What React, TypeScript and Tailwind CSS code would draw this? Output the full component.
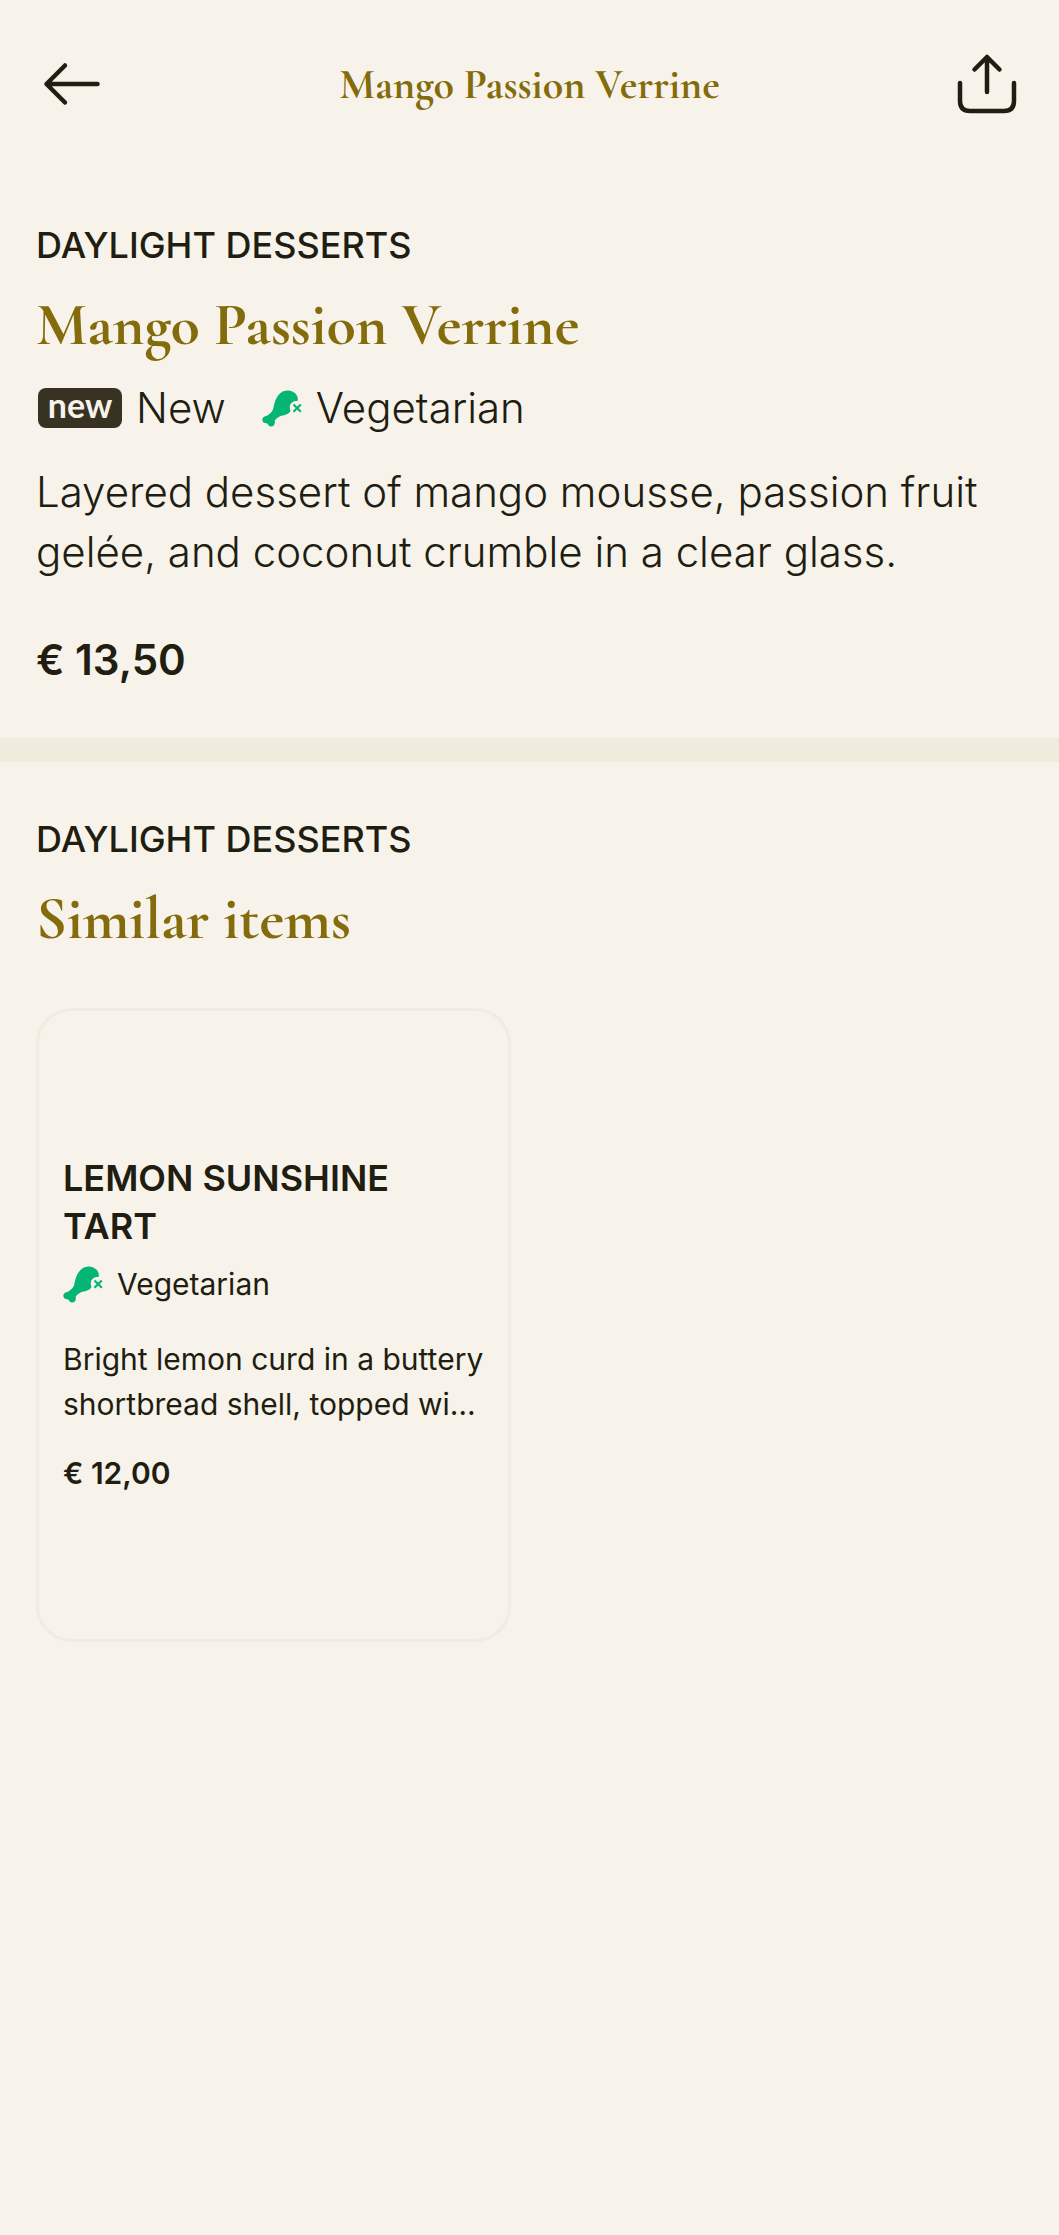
import React from "react";

const serif = "font-['Cormorant_Garamond','Liberation_Serif',serif] font-bold text-[#846b0b]";

function BackIcon() {
  return (
    <svg className="h-[72px] w-[72px]" viewBox="0 0 72 72" fill="none" stroke="#211d10" strokeWidth="4.5" strokeLinecap="round" strokeLinejoin="round" aria-hidden="true">
      <path d="M29 17.500 10.500 36 29 54.500M10.500 36H61.500" />
    </svg>
  );
}

function ShareIcon() {
  return (
    <svg className="h-[72px] w-[72px]" viewBox="0 0 72 72" fill="none" stroke="#211d10" strokeWidth="4.5" strokeLinecap="round" strokeLinejoin="round" aria-hidden="true">
      <path d="M36 44V9M23.500 21.500 36 9 48.500 21.500" />
      <path d="M9 35V53Q9 63 19 63H53Q63 63 63 53V35" />
    </svg>
  );
}

function VegetarianIcon() {
  return (
    <svg className="h-[37px] w-10 shrink-0" viewBox="0 0 40 37" aria-hidden="true">
      <path
        fill="#05b576"
        d="M25.500.5C29.500.6 33.500 2.500 35 5.800C36 8 36 10 35.500 11C31 10.500 27.500 13.500 27.800 18C27.900 19.500 28.500 20.500 28.500 21C27 24 23 25 19.500 25.800C17 26.500 14.500 28.500 13 30C12.500 30.800 12.900 31.200 12.900 32.200C12.800 35 11 37 8.500 36.500C6.500 36.200 6.200 34.500 5.200 33.600C4 33 1.500 33.200.6 31.200C-.4 28.600 1.500 26.200 4 26C5.500 25.900 6.200 25 7.200 24C9.800 22.300 10.800 20.500 11.400 18C12 14.500 13 10.500 15 7.200C17.500 3.200 21 .4 25.500.5Z"
      />
      <path d="M31.500 14.500 38.800 21.800M38.800 14.500 31.500 21.800" stroke="#05b576" strokeWidth="2.200" fill="none" />
    </svg>
  );
}

function SectionHeading({ level, title }: { level: "h2" | "h3"; title: string }) {
  const Tag = level;
  return (
    <div className="flex flex-col gap-5">
      <p className="text-[36px] leading-[54px] font-medium">DAYLIGHT DESSERTS</p>
      <Tag className={`${serif} text-[60px] leading-[66px]`}>{title}</Tag>
    </div>
  );
}

export default function App() {
  return (
    <div className="min-h-screen bg-[#f7f3eb] font-['Inter',sans-serif] text-[#211d10]">
      <header className="flex h-[168px] items-center justify-between px-9">
        <button type="button" aria-label="Back">
          <BackIcon />
        </button>
        <h1 className={`${serif} pt-0.5 text-[42px] leading-[48px]`}>Mango Passion Verrine</h1>
        <button type="button" aria-label="Share">
          <ShareIcon />
        </button>
      </header>

      <main>
        <section className="px-9 pt-[50px] pb-12">
          <SectionHeading level="h2" title="Mango Passion Verrine" />
          <ul className="mt-5 flex items-center gap-9 text-[42px] leading-[60px] font-light">
            <li className="flex items-center gap-[14px] pl-0.5">
              <span className="flex h-10 w-[84px] items-center justify-center rounded-lg bg-[#383223] pb-1.5 font-['Lato',sans-serif] text-[34px] leading-[34px] font-bold text-[#f7f3eb]">
                new
              </span>
              New
            </li>
            <li className="flex items-center gap-[14px]">
              <VegetarianIcon />
              Vegetarian
            </li>
          </ul>
          <p className="mt-6 text-[42px] leading-[60px] font-light">
            Layered dessert of mango mousse, passion fruit gelée, and coconut crumble in a clear glass.
          </p>
          <p className="mt-12 text-[42px] leading-[60px] font-semibold">€ 13,50</p>
        </section>

        <div className="h-6 bg-[#efebdd]" />

        <section className="px-9 pt-[50px] pb-12">
          <SectionHeading level="h3" title="Similar items" />
          <a
            href="#lemon-sunshine-tart"
            className="mt-14 flex w-[475px] max-w-full flex-col rounded-[36px] border-3 border-[#f0ece1] px-6 py-[143px]"
          >
            <h4 className="text-[36px] leading-[48px] font-semibold">LEMON SUNSHINE TART</h4>
            <div className="mt-3 flex items-center gap-[14px] text-[30px] leading-[45px]">
              <VegetarianIcon />
              Vegetarian
            </div>
            <p className="mt-[30px] text-[30px] leading-[45px]">
              Bright lemon curd in a buttery shortbread shell, topped wi…
            </p>
            <p className="mt-6 text-[30px] leading-[45px] font-semibold">€ 12,00</p>
          </a>
        </section>
      </main>
    </div>
  );
}
